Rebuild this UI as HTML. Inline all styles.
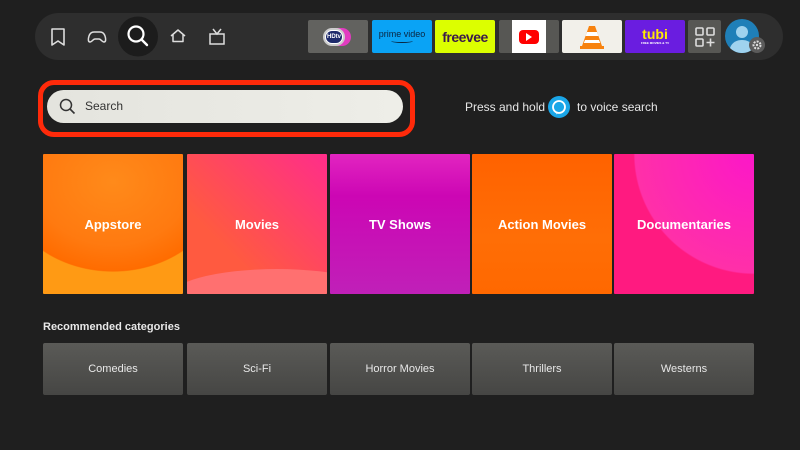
<!DOCTYPE html>
<html><head><meta charset="utf-8"><style>
*{margin:0;padding:0;box-sizing:border-box}
body{width:800px;height:450px;background:#1f1f1f;font-family:"Liberation Sans","DejaVu Sans",sans-serif;position:relative;overflow:hidden;color:#fff}
.abs{position:absolute}
.nav{left:35px;top:13px;width:748px;height:47px;background:#2e2e2e;border-radius:24px}
.app{top:20px;height:33px;width:60px;border-radius:2px;display:flex;align-items:center;justify-content:center;overflow:hidden}
.tile{top:154px;width:140px;height:140px;display:flex;align-items:center;justify-content:center;font-weight:bold;font-size:13px;overflow:hidden;border-radius:1px}
.tile span{position:relative}
.cat{top:343px;width:140px;height:52px;border-radius:2px;display:flex;align-items:center;justify-content:center;font-size:11px;color:#e8e8e8;background:linear-gradient(180deg,#5a5a57,#464644);overflow:hidden}
</style></head><body>
<div class="abs nav"></div>
<!-- nav icons -->
<svg class="abs" style="left:35px;top:13px" width="210" height="47" viewBox="0 0 210 47">
<path d="M17 16h12v16l-6-4-6 4z" fill="none" stroke="#ddd" stroke-width="1.6" stroke-linejoin="round"/>
<path d="M55 29c-2 0-2-3-1-6 1-3 3-4 5-4h6c2 0 4 1 5 4 1 3 1 6-1 6-2 0-3-3-5-3h-4c-2 0-3 3-5 3z" fill="none" stroke="#ddd" stroke-width="1.5"/>
<circle cx="103" cy="23.5" r="20" fill="#1c1c1c"/>
<circle cx="101" cy="21" r="7.5" fill="none" stroke="#fff" stroke-width="2.2"/>
<path d="M106.5 26.5l5.5 5.5" stroke="#fff" stroke-width="2.4" stroke-linecap="round"/>
<path d="M136 23l7-6 7 6M138 21.5v7h10v-7" fill="none" stroke="#ddd" stroke-width="1.5" stroke-linejoin="round"/>
<rect x="175" y="21" width="14" height="10" fill="none" stroke="#ddd" stroke-width="1.5"/>
<path d="M178 16l4 5 4-5" fill="none" stroke="#ddd" stroke-width="1.5"/>
</svg>
<div class="abs app" style="left:308px;background:#62625f"><div style="width:26px;height:18px;border-radius:9px;background:#e23cc0;position:relative"><div style="position:absolute;left:-2px;top:0;width:22px;height:18px;border-radius:9px;background:#fff;border:2px solid #ccc"></div><div style="position:absolute;left:1px;top:3px;width:16px;height:12px;border-radius:6px;background:#1d2a6b;color:#fff;font-size:6px;font-weight:bold;text-align:center;line-height:12px">HDtv</div></div></div>
<div class="abs app" style="left:372px;background:#0aa3f5;flex-direction:column;color:#0a2540;font-size:9px;line-height:9px">prime video<div style="width:22px;height:4px;border-bottom:1.2px solid #0a2540;border-radius:0 0 50% 50%"></div></div>
<div class="abs app" style="left:435px;background:#dcff00;color:#3b1a4a;font-weight:bold;font-size:14px;letter-spacing:-0.5px">freevee</div>
<div class="abs app" style="left:499px;background:#575754"><div style="width:34px;height:33px;background:#fff;display:flex;align-items:center;justify-content:center"><div style="width:20px;height:14px;background:#f00;border-radius:4px;display:flex;align-items:center;justify-content:center"><div style="border-left:6px solid #fff;border-top:4px solid transparent;border-bottom:4px solid transparent"></div></div></div></div>
<div class="abs app" style="left:562px;background:#f2f0ea"><svg width="24" height="28" viewBox="0 0 24 28"><path d="M9 3h6l7 20H2z" fill="#f7820f"/><path d="M7 9h10l1.5 4h-13zM5 17h14l1.2 3H3.8z" fill="#fff"/><rect x="0" y="23" width="24" height="3" fill="#f7820f"/></svg></div>
<div class="abs app" style="left:625px;background:#6a1de0;flex-direction:column;color:#ffea00;font-weight:bold;font-size:14px;line-height:13px">tubi<span style="font-size:3px;line-height:4px;color:#fff">FREE MOVIES &amp; TV</span></div>
<div class="abs app" style="left:688px;width:33px;background:#575754"><svg width="20" height="20" viewBox="0 0 20 20" fill="none" stroke="#ddd" stroke-width="1.6"><rect x="1" y="1" width="7" height="7" rx="1"/><rect x="12" y="1" width="7" height="7" rx="1"/><rect x="1" y="12" width="7" height="7" rx="1"/><path d="M15.5 11.5v8M11.5 15.5h8"/></svg></div>
<svg class="abs" style="left:725px;top:19px" width="42" height="36" viewBox="0 0 42 36"><circle cx="17" cy="17" r="17" fill="#1f7fb8"/><circle cx="17" cy="13" r="6" fill="#9fd2ee"/><path d="M5 29c2-6 7-8 12-8s10 2 12 8c-3 3-7 5-12 5s-9-2-12-5z" fill="#9fd2ee"/><circle cx="32" cy="26" r="8" fill="#5b5b5b"/><circle cx="32" cy="26" r="3.5" fill="none" stroke="#ddd" stroke-width="2" stroke-dasharray="2 1.2"/><circle cx="32" cy="26" r="1.2" fill="#ddd"/></svg>

<!-- search -->
<div class="abs" style="left:38px;top:80px;width:377px;height:57px;border:5px solid #ff2a0a;border-radius:16px"></div>
<div class="abs" style="left:47px;top:90px;width:356px;height:33px;border-radius:17px;background:linear-gradient(90deg,#e4e4de,#eeeee8);color:#333;font-size:12px;line-height:33px;padding-left:38px">Search</div>
<svg class="abs" style="left:58px;top:97px" width="20" height="20" viewBox="0 0 20 20"><circle cx="8" cy="8" r="5.5" fill="none" stroke="#333" stroke-width="1.5"/><path d="M12 12l4.5 4.5" stroke="#333" stroke-width="1.6"/></svg>
<div class="abs" style="left:465px;top:100px;font-size:12px;color:#e6e6e6">Press and hold</div>
<svg class="abs" style="left:548px;top:96px" width="22" height="22" viewBox="0 0 22 22"><circle cx="11" cy="11" r="11" fill="#1aa6e8"/><circle cx="11" cy="11" r="6" fill="none" stroke="#fff" stroke-width="1.8"/><path d="M9 16.5l-1 2 3-2z" fill="#fff"/></svg>
<div class="abs" style="left:577px;top:100px;font-size:12px;color:#e6e6e6">to voice search</div>

<!-- tiles -->
<div class="abs tile" style="left:43px;background:radial-gradient(ellipse 110px 90px at 50% 20%,#ff8a1a 0,#ff7a10 70%,#ff6c00 99%,#ff9a14 100%)"><span>Appstore</span></div>
<div class="abs tile" style="left:187px;background:linear-gradient(225deg,#ff2d8a,#ff5a40 70%)"><div class="abs" style="left:-20px;top:115px;width:220px;height:60px;border-radius:50%;background:#ff7070"></div><span>Movies</span></div>
<div class="abs tile" style="left:330px;background:linear-gradient(180deg,#e225c0,#cc06b4 30%,#c020b8)"><span>TV Shows</span></div>
<div class="abs tile" style="left:472px;background:linear-gradient(180deg,#ff6200,#ff6e06 60%,#ff6800)"><span>Action Movies</span></div>
<div class="abs tile" style="left:614px;background:radial-gradient(circle 140px at 100% 0,#fc17c8 0,#ff30a8 85%,#ff1a80 86%)"><span>Documentaries</span></div>

<div class="abs" style="left:43px;top:321px;font-size:11px;font-weight:bold;color:#e8e8e8">Recommended categories</div>
<div class="abs cat" style="left:43px">Comedies</div>
<div class="abs cat" style="left:187px">Sci-Fi</div>
<div class="abs cat" style="left:330px">Horror Movies</div>
<div class="abs cat" style="left:472px">Thrillers</div>
<div class="abs cat" style="left:614px">Westerns</div>
</body></html>
